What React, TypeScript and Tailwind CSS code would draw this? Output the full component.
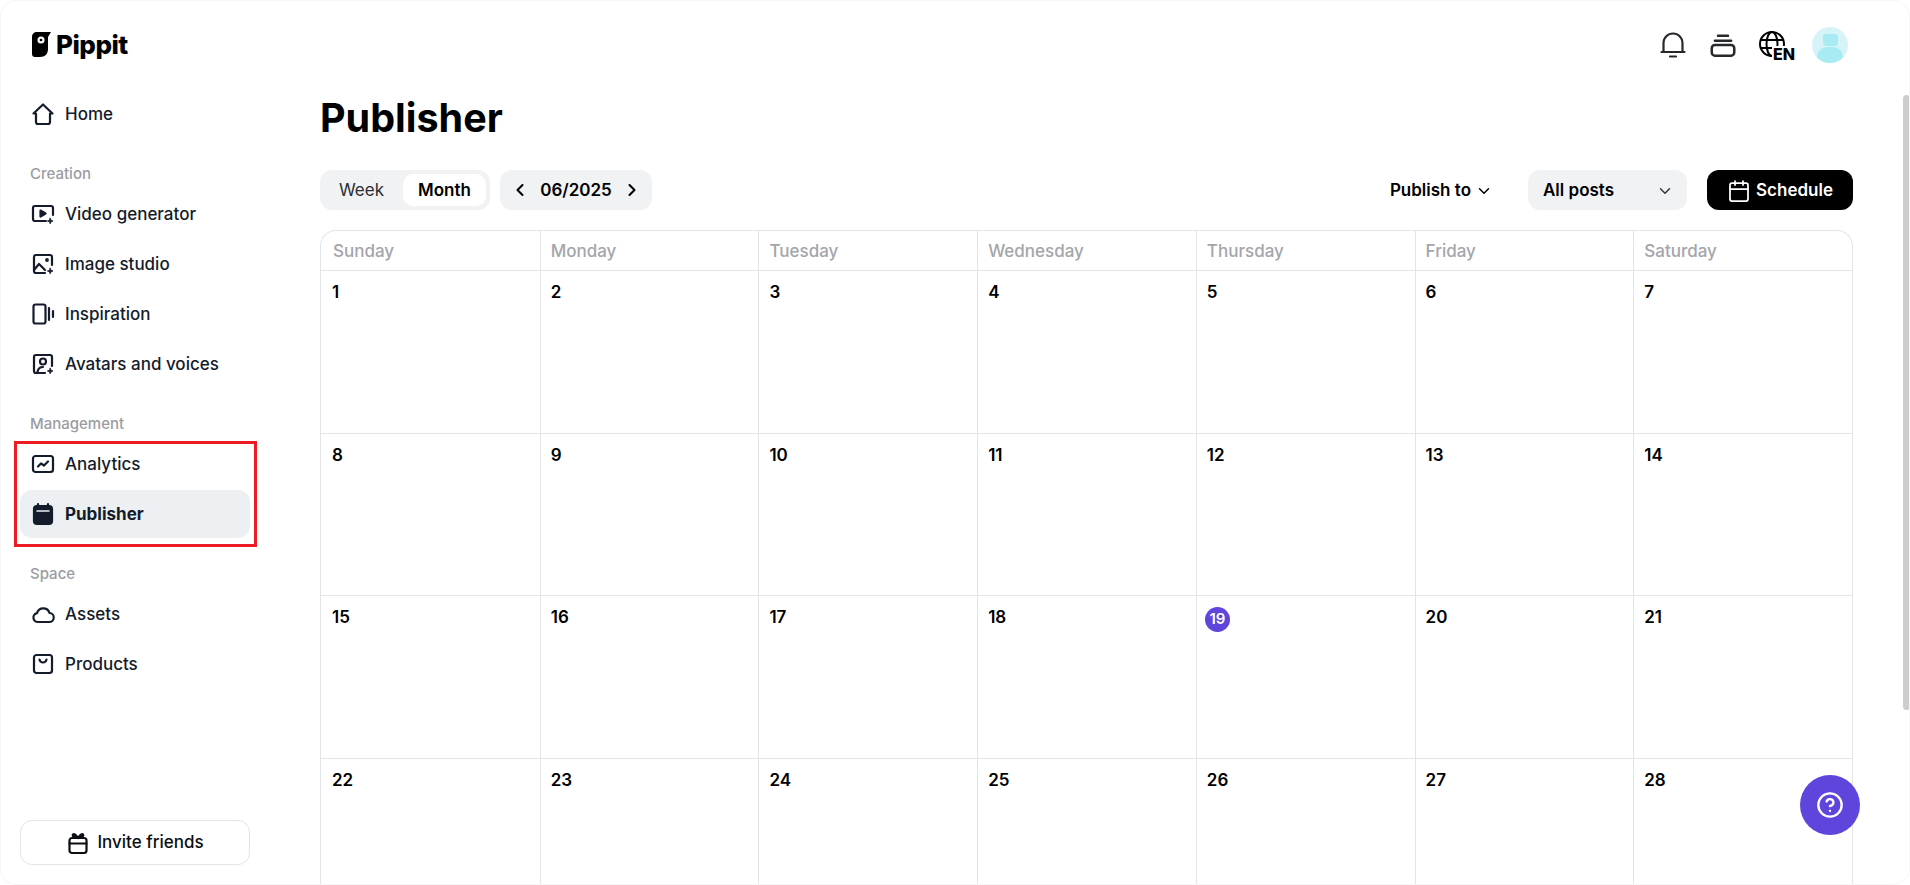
import { Calendar, ChevronDown, ChevronLeft, ChevronRight, CircleHelp } from "lucide-react";
import type { ReactNode } from "react";

const WEEK_DAYS = ["Sunday", "Monday", "Tuesday", "Wednesday", "Thursday", "Friday", "Saturday"];
const WEEKS = [
  [1, 2, 3, 4, 5, 6, 7],
  [8, 9, 10, 11, 12, 13, 14],
  [15, 16, 17, 18, 19, 20, 21],
  [22, 23, 24, 25, 26, 27, 28],
];

const Spark = () => <path d="M19.2 16.2l.8 2 2 .8-2 .8-.8 2-.8-2-2-.8 2-.8z" fill="currentColor" stroke="currentColor" strokeWidth="0.8" />;

const NavIcon = ({ children }: { children: ReactNode }) => (
  <svg viewBox="0 0 24 24" className="w-6 h-6 shrink-0" fill="none" stroke="currentColor" strokeWidth="2.2" strokeLinecap="round" strokeLinejoin="round">
    {children}
  </svg>
);

const HomeIcon = () => (
  <NavIcon>
    <path d="M2.500 11.500L12 2.500l9.500 9H19V20a2 2 0 0 1-2 2H7a2 2 0 0 1-2-2v-8.500z" />
  </NavIcon>
);
const VideoIcon = () => (
  <NavIcon>
    <path d="M15 19H4a2 2 0 0 1-2-2V6a2 2 0 0 1 2-2h16a2 2 0 0 1 2 2v7" />
    <path d="M9.500 8.500l5 3-5 3z" fill="currentColor" />
    <Spark />
  </NavIcon>
);
const ImageIcon = () => (
  <NavIcon>
    <path d="M14 21H5a2 2 0 0 1-2-2V5a2 2 0 0 1 2-2h14a2 2 0 0 1 2 2v8" />
    <path d="M3 18l5-6 6 6" />
    <circle cx="16" cy="8" r="0.8" fill="currentColor" />
    <Spark />
  </NavIcon>
);
const InspirationIcon = () => (
  <NavIcon>
    <rect x="2.500" y="2.500" width="12" height="19" rx="2" />
    <path d="M18 6v12M22 9v6" />
  </NavIcon>
);
const AvatarIcon = () => (
  <NavIcon>
    <path d="M14 21H5a2 2 0 0 1-2-2V5a2 2 0 0 1 2-2h14a2 2 0 0 1 2 2v9" />
    <circle cx="12" cy="9.500" r="3" />
    <path d="M6.500 20c.5-3 2.500-5 5.500-5" />
    <Spark />
  </NavIcon>
);
const AnalyticsIcon = () => (
  <NavIcon>
    <rect x="2" y="4" width="20" height="16" rx="2.500" />
    <path d="M7 14.500l3-3 3 2 4-4" />
  </NavIcon>
);
const PublisherIcon = () => (
  <NavIcon>
    <path d="M7 2v3M17 2v3" />
    <rect x="3" y="4" width="18" height="18" rx="3" fill="currentColor" />
    <path d="M6 9h12" stroke="#ecf0f2" strokeWidth="1.500" />
  </NavIcon>
);
const AssetsIcon = () => (
  <NavIcon>
    <path d="M7 20a4.500 4.500 0 0 1-1-8.900A6.500 6.500 0 0 1 18.500 11a4.500 4.500 0 0 1-.5 9z" />
  </NavIcon>
);
const ProductsIcon = () => (
  <NavIcon>
    <rect x="3" y="3" width="18" height="18" rx="2.500" />
    <path d="M8.500 7.500c.5 2 2 3 3.500 3s3-1 3.500-3" />
  </NavIcon>
);
const GiftIcon = () => (
  <NavIcon>
    <rect x="3.500" y="7" width="17" height="15" rx="2.500" />
    <path d="M3.500 12.500h17" />
    <path d="M12 7C10 4 8 2.500 7 3.500 6 4.500 8 7 12 7c4 0 6-2.500 5-3.500C16 2.500 14 4 12 7z" />
  </NavIcon>
);

const NavItem = ({ icon, label, active }: { icon: ReactNode; label: string; active?: boolean }) => (
  <div className={`flex items-center gap-[10px] h-12 pl-[11px] my-px rounded-xl text-[#141b2b] ${active ? "bg-[#ecf0f2] font-bold" : "font-[550]"}`}>
    {icon}
    <span className="text-[17px] leading-6">{label}</span>
  </div>
);

const SectionLabel = ({ text }: { text: string }) => (
  <div className="h-[25px] mt-[25px] pl-[10px] text-[15px] leading-[20px] font-medium text-[#9a9ca2]">{text}</div>
);

const Sidebar = () => (
  <aside className="relative w-[270px] shrink-0 h-full flex flex-col px-5">
    <div className="flex items-center gap-[5px] h-[25px] mt-8 pl-3 text-black">
      <svg viewBox="0 0 19 25" className="w-[19px] h-[25px] shrink-0">
        <path d="M0 5C0 2 2 0 5 0h14l-3 5v12c0 5-3 8-8 8H3c-2 0-3-1-3-3z" fill="currentColor" />
        <circle cx="9" cy="8" r="3.500" fill="#fff" />
        <circle cx="9" cy="8" r="1.300" fill="currentColor" />
      </svg>
      <span className="text-[26px] leading-[25px] font-extrabold tracking-[-0.5px]">Pippit</span>
    </div>
    <div className="mt-[32px]">
      <NavItem label="Home" icon={<HomeIcon />} />
    </div>
    <SectionLabel text="Creation" />
    <NavItem label="Video generator" icon={<VideoIcon />} />
    <NavItem label="Image studio" icon={<ImageIcon />} />
    <NavItem label="Inspiration" icon={<InspirationIcon />} />
    <NavItem label="Avatars and voices" icon={<AvatarIcon />} />
    <SectionLabel text="Management" />
    <NavItem label="Analytics" icon={<AnalyticsIcon />} />
    <NavItem label="Publisher" icon={<PublisherIcon />} active />
    <SectionLabel text="Space" />
    <NavItem label="Assets" icon={<AssetsIcon />} />
    <NavItem label="Products" icon={<ProductsIcon />} />
    <button className="mt-auto mb-[20px] h-[45px] w-full flex items-center justify-center gap-[7px] rounded-xl border border-[#e3e4e6] text-[17px] font-[550] text-[#0b0f14]">
      <GiftIcon />
      Invite friends
    </button>
    {/* annotation box from the screenshot */}
    <div className="absolute left-[14px] top-[441px] w-[243px] h-[106px] border-[3px] border-[#ed1c24]" />
  </aside>
);

const TopIcons = () => (
  <div className="flex items-center justify-end h-[90px] pr-[62px] text-[#26282c]">
    <svg viewBox="0 0 30 30" className="w-[30px] h-[30px]" fill="none" stroke="currentColor" strokeWidth="2.200" strokeLinecap="round" strokeLinejoin="round">
      <path d="M5.500 22v-9a9.500 9.500 0 0 1 19 0v9" />
      <path d="M3.500 22h23" />
      <path d="M12 26.500h6" />
    </svg>
    <svg viewBox="0 0 24 24" className="w-[30px] h-[30px] ml-5" fill="none" stroke="currentColor" strokeWidth="2" strokeLinecap="round" strokeLinejoin="round">
      <path d="M8 4.500h8M5.500 8.500h13" />
      <rect x="3" y="12" width="18" height="8.500" rx="2.500" />
    </svg>
    <div className="relative w-[36px] h-[36px] ml-[21px] text-black">
      <svg viewBox="0 0 30 30" className="absolute left-0 top-[4px] w-[30px] h-[30px]" fill="none" stroke="currentColor" strokeWidth="2">
        <circle cx="13" cy="13" r="12" />
        <ellipse cx="13" cy="13" rx="5.500" ry="12" />
        <path d="M2 9h22M2 17h12" />
      </svg>
      <span className="absolute right-0 bottom-0 bg-white pl-[1px] text-[16px] leading-[17px] font-extrabold">EN</span>
    </div>
    <div className="relative w-9 h-9 ml-[17px] rounded-full bg-[#d6f3f7] overflow-hidden">
      <div className="absolute left-[11px] top-[7px] w-[15px] h-[12px] rounded-[3px] bg-[#a9ebf3]" />
      <div className="absolute left-[5px] top-[20px] w-[26px] h-[20px] rounded-full bg-[#a9ebf3]" />
    </div>
  </div>
);

const Toolbar = () => (
  <div className="flex items-center h-10 mt-[25px]">
    <div className="flex items-center h-10 w-[170px] p-1 rounded-xl bg-[#f1f2f4] text-[17px]">
      <span className="w-[75px] pt-px text-center font-normal text-[#2a2d33]">Week</span>
      <span className="w-[83px] ml-[4px] h-8 pt-px flex items-center justify-center rounded-[10px] bg-white font-semibold text-black">Month</span>
    </div>
    <div className="flex items-center justify-between h-10 w-[152px] ml-[10px] px-[10px] rounded-xl bg-[#f1f2f4] text-black">
      <ChevronLeft className="w-5 h-5" strokeWidth={2.5} />
      <span className="pt-px text-[17px] font-semibold">06/2025</span>
      <ChevronRight className="w-5 h-5" strokeWidth={2.5} />
    </div>
    <div className="flex items-center gap-1 ml-auto pt-px text-[17px] font-semibold text-black">
      Publish to
      <ChevronDown className="w-[18px] h-[18px]" strokeWidth={2} />
    </div>
    <div className="flex items-center justify-between h-10 w-[159px] ml-[35px] pl-[15px] pr-[13px] pt-px rounded-xl bg-[#f1f2f4] text-[17px] font-semibold text-black">
      All posts
      <ChevronDown className="w-[18px] h-[18px] text-[#33363b]" strokeWidth={2} />
    </div>
    <button className="flex items-center justify-center gap-[5px] h-10 w-[146px] ml-5 pt-px rounded-xl bg-black text-[17px] font-semibold text-white">
      <Calendar className="w-6 h-6" strokeWidth={1.75} />
      Schedule
    </button>
  </div>
);

const CalendarGrid = () => (
  <div className="mt-5 w-[1533px] rounded-t-2xl border border-b-0 border-[#e3e4e6] overflow-hidden">
    <div className="grid grid-cols-7 h-10 border-b border-[#e3e4e6]">
      {WEEK_DAYS.map((day, i) => (
        <div key={day} className={`text-[17px] leading-10 font-[550] text-[#a3a5ab] ${i > 0 ? "pl-[10px] border-l border-[#e3e4e6]" : "pl-3"}`}>
          {day}
        </div>
      ))}
    </div>
    {WEEKS.map((week) => (
      <div key={week[0]} className="grid grid-cols-7 h-[162.5px] border-b border-[#e3e4e6]">
        {week.map((date, i) => (
          <div key={date} className={`pt-[9px] ${i > 0 ? "pl-[10px] border-l border-[#e3e4e6]" : "pl-[11px]"}`}>
            {date === 19 ? (
              <span className="flex items-center justify-center w-[25px] h-[25px] mt-[2px] -ml-[2px] rounded-full bg-[#5f45dc] text-[15px] font-semibold text-white">{date}</span>
            ) : (
              <span className="block text-[17px] leading-6 font-semibold text-black">{date}</span>
            )}
          </div>
        ))}
      </div>
    ))}
  </div>
);

export default function App() {
  return (
    <div className="relative flex h-[885px] w-[1910px] overflow-hidden bg-white" style={{ fontFamily: "Inter, 'Noto Sans', sans-serif" }}>
      <Sidebar />
      <main className="flex-1 min-w-0 pl-[50px]">
        <TopIcons />
        <h1 className="h-[54px] mt-[1px] text-[39.5px] leading-[54px] font-bold text-black">Publisher</h1>
        <div className="w-[1533px]">
          <Toolbar />
        </div>
        <CalendarGrid />
      </main>
      {/* page scrollbar thumb */}
      <div className="absolute right-0 top-[95px] w-[7px] h-[615px] rounded-[4px] bg-[#cdcdcd]" />
      <button className="absolute left-[1800px] top-[775px] w-[60px] h-[60px] flex items-center justify-center rounded-full bg-[#5f45dc] text-white">
        <CircleHelp className="w-7 h-7" strokeWidth={2} />
      </button>
      {/* window frame with rounded corners */}
      <div className="absolute inset-0 rounded-2xl border border-[#f6f6f6] pointer-events-none" />
    </div>
  );
}
